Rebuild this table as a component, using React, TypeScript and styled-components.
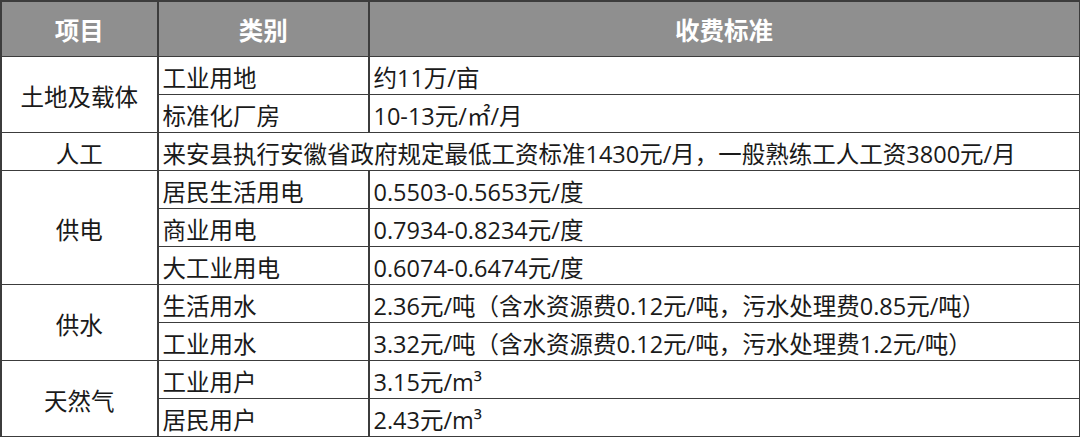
import React from "react";
import styled, { createGlobalStyle } from "styled-components";

const Global = createGlobalStyle`
  html, body { margin: 0; padding: 0; background: #ffffff; }
  body { font-family: "Open Sans", "Noto Sans CJK SC", sans-serif; }
`;

const Table = styled.div`
  width: 1080px;
  height: 437px;
  box-sizing: border-box;
  display: grid;
  grid-template-columns: 155.5px 209.5px 1fr;
  grid-template-rows: 53.5px repeat(10, 36.5px);
  gap: 1.5px;
  padding: 2px 1.5px 1.5px 1.5px;
  background: #3c3c3c;
`;

const HeadCell = styled.div`
  background: #8f8f8f;
  color: #ffffff;
  font-family: "Noto Sans CJK SC", sans-serif;
  font-weight: 700;
  font-size: 24.5px;
  display: flex;
  align-items: center;
  justify-content: center;
  padding-top: 2px;
`;

const Cell = styled.div<{ $center?: boolean; $span?: number; $colSpan?: number }>`
  background: #ffffff;
  color: #1a1a1a;
  font-size: 23.5px;
  display: flex;
  align-items: center;
  justify-content: ${(p) => (p.$center ? "center" : "flex-start")};
  padding: 4px 0 0 4px;
  box-sizing: border-box;
  white-space: nowrap;
  ${(p) => (p.$span ? `grid-row: span ${p.$span};` : "")}
  ${(p) => (p.$colSpan ? `grid-column: span ${p.$colSpan};` : "")}
  ${(p) => (p.$center ? "padding-left: 0;" : "")}
`;

type Group = { item: string; rows: [string, string][] };

const groups: Group[] = [
  {
    item: "土地及载体",
    rows: [
      ["工业用地", "约11万/亩"],
      ["标准化厂房", "10-13元/㎡/月"],
    ],
  },
  {
    item: "供电",
    rows: [
      ["居民生活用电", "0.5503-0.5653元/度"],
      ["商业用电", "0.7934-0.8234元/度"],
      ["大工业用电", "0.6074-0.6474元/度"],
    ],
  },
  {
    item: "供水",
    rows: [
      ["生活用水", "2.36元/吨（含水资源费0.12元/吨，污水处理费0.85元/吨）"],
      ["工业用水", "3.32元/吨（含水资源费0.12元/吨，污水处理费1.2元/吨）"],
    ],
  },
  {
    item: "天然气",
    rows: [
      ["工业用户", "3.15元/m³"],
      ["居民用户", "2.43元/m³"],
    ],
  },
];

function GroupRows({ g }: { g: Group }) {
  return (
    <>
      <Cell $center $span={g.rows.length}>
        {g.item}
      </Cell>
      {g.rows.map(([k, v], i) => (
        <React.Fragment key={i}>
          <Cell>{k}</Cell>
          <Cell>{v}</Cell>
        </React.Fragment>
      ))}
    </>
  );
}

export default function App() {
  return (
    <>
      <Global />
      <Table>
        <HeadCell>项目</HeadCell>
        <HeadCell>类别</HeadCell>
        <HeadCell>收费标准</HeadCell>
        <GroupRows g={groups[0]} />
        <Cell $center>人工</Cell>
        <Cell $colSpan={2}>
          来安县执行安徽省政府规定最低工资标准1430元/月，一般熟练工人工资3800元/月
        </Cell>
        <GroupRows g={groups[1]} />
        <GroupRows g={groups[2]} />
        <GroupRows g={groups[3]} />
      </Table>
    </>
  );
}
